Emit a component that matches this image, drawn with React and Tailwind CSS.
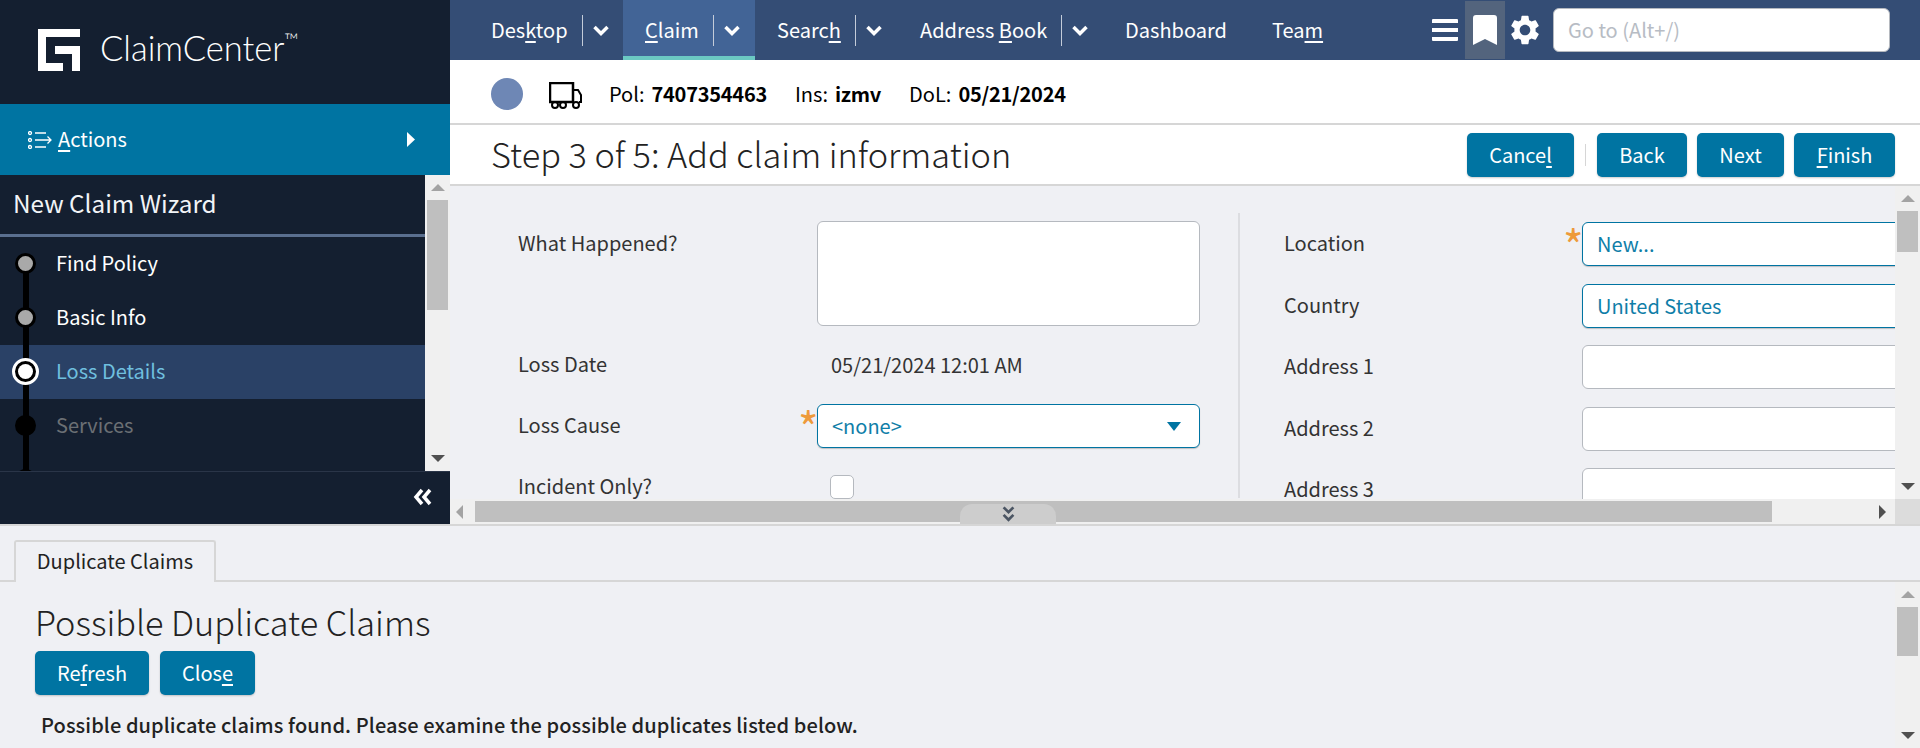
const font = { fontFamily: '"Noto Sans CJK SC", "Noto Sans", sans-serif' };

function Key({ children }) {
  return <span className="underline underline-offset-[3px] decoration-[1.5px]">{children}</span>;
}

function NavItem({ children, active, chevron, width }) {
  return (
    <div className={`flex h-[60px] items-center ${active ? "bg-[#426496] shadow-[inset_0_-4px_0_#6bc9c3]" : ""} ${width}`}>
      <span className="ml-[22px] whitespace-nowrap">{children}</span>
      {chevron && (
        <>
          <span className="ml-[14px] h-[31px] w-[1px] bg-[#c4ccd9]" />
          <svg viewBox="0 0 16 11" className="ml-[10px] h-[11px] w-[16px]">
            <path d="M1.500 2 8 8.500 14.500 2" fill="none" stroke="#fff" strokeWidth="3.500" />
          </svg>
        </>
      )}
    </div>
  );
}

function Btn({ children, width }) {
  return (
    <button className={`flex h-[44px] items-center justify-center rounded-[5px] bg-[#0074a2] text-[20px] text-white shadow-[0_1px_2px_rgba(0,0,0,.2)] ${width}`}>
      {children}
    </button>
  );
}

function Arrow({ dir, dark }) {
  const d = { up: "M0 8 8 0l8 8z", down: "M0 0h16L8 8z", left: "M8 0v16L0 8z", right: "M0 0l8 8-8 8z" }[dir];
  const box = dir === "up" || dir === "down" ? "0 0 16 8" : "0 0 8 16";
  const size = dir === "up" || dir === "down" ? "h-[7px] w-[14px]" : "h-[14px] w-[7px]";
  return (
    <svg viewBox={box} className={size}>
      <path d={d} fill={dark ? "#505050" : "#a3a3a3"} />
    </svg>
  );
}

function VScroll({ thumb, className = "" }) {
  return (
    <div className={`flex w-[25px] shrink-0 flex-col items-center bg-[#f0f0f0] ${className}`}>
      <div className="flex h-[25px] items-start justify-center pt-[9px]"><Arrow dir="up" /></div>
      <div className={`w-[21px] bg-[#bfbfbf] ${thumb}`} />
      <div className="flex-1" />
      <div className="flex items-center justify-center pb-[9px]"><Arrow dir="down" dark /></div>
    </div>
  );
}

function Step({ label, state, first }) {
  const rowClass = state === "active" ? "bg-[#2a4166] text-[#6fbfdf]" : state === "off" ? "text-[#6b6f74]" : "text-white";
  return (
    <div className={`relative flex h-[54px] items-center pb-[2px] pl-[56px] text-[20px] ${rowClass}`}>
      <span className={`absolute left-[23px] w-[6px] bg-black ${first ? "bottom-0 top-[27px]" : "top-0 h-full"}`} />
      {state === "active" ? (
        <span className="absolute left-[12px] top-[13px] size-[27px] rounded-full border-[3px] border-white bg-black p-[3px]">
          <span className="block size-full rounded-full bg-white" />
        </span>
      ) : (
        <span className={`absolute left-[15px] top-[16px] size-[21px] rounded-full border-[3px] border-black ${state === "off" ? "bg-black" : "bg-[#a9a9a9]"}`} />
      )}
      {label}
    </div>
  );
}

function Sidebar() {
  return (
    <aside className="flex h-[524px] w-[450px] shrink-0 flex-col bg-[#141f30]">
      <div className="flex h-[104px] items-center pb-[4px] pl-[38px]">
        <svg viewBox="0 0 42 42" className="size-[42px]">
          <path fill="#fff" d="M0 0h42v8H8v26h17v8H0z" />
          <path fill="#fff" d="M17 17h25v25h-8V25H17z" />
        </svg>
        <span className="mb-[3px] ml-[20px] flex items-start text-[34.500px] font-light leading-none text-white" style={{ fontFamily: "Lato, sans-serif" }}>
          ClaimCenter
          <span className="-mt-[1px] text-[19px] leading-none">™</span>
        </span>
      </div>
      <div className="flex h-[71px] items-center bg-[#0074a2] pl-[28px] pr-[35px] text-[20px] text-white">
        <svg viewBox="0 0 24 18" className="h-[18px] w-[24px]" fill="none" stroke="#fff" strokeWidth="1.300">
          <circle cx="2" cy="2" r="1.500" />
          <circle cx="2" cy="9" r="1.500" />
          <circle cx="2" cy="16" r="1.500" />
          <path d="M7 2h11M7 16h11M7 9h16M19.500 5.500 23 9l-3.500 3.500" />
        </svg>
        <span className="ml-[6px] pb-[2px]"><Key>A</Key>ctions</span>
        <svg viewBox="0 0 8 15" className="ml-auto h-[15px] w-[8px]"><path d="M0 0l8 7.500-8 7.500z" fill="#fff" /></svg>
      </div>
      <div className="flex min-h-0 flex-1">
        <div className="min-w-0 flex-1 overflow-hidden">
          <div className="flex h-[62px] items-center border-b-[3px] border-[#5a6f8f] pb-[2px] pl-[13px] text-[24.300px] text-[#f2f4f7]">
            New Claim Wizard
          </div>
          <Step label="Find Policy" first />
          <Step label="Basic Info" />
          <Step label="Loss Details" state="active" />
          <Step label="Services" state="off" />
          <Step label="" state="off" />
        </div>
        <VScroll thumb="h-[110px]" />
      </div>
      <div className="flex h-[53px] items-start justify-end border-t border-[#2a3548] pr-[17px] pt-[16px]">
        <svg viewBox="0 0 20 18" className="h-[18px] w-[20px]">
          <path d="M9 2 3 9l6 7M17 2l-6 7 6 7" fill="none" stroke="#fff" strokeWidth="3.500" />
        </svg>
      </div>
    </aside>
  );
}

function TopNav() {
  return (
    <nav className="flex h-[60px] items-center bg-[#344d75] text-[20px] text-white">
      <div className="w-[19px]" />
      <NavItem chevron width="w-[154px]">Des<Key>k</Key>top</NavItem>
      <NavItem chevron active width="w-[132px]"><Key>C</Key>laim</NavItem>
      <NavItem chevron width="w-[143px]">Searc<Key>h</Key></NavItem>
      <NavItem chevron width="w-[205px]">Address <Key>B</Key>ook</NavItem>
      <NavItem width="w-[147px]">Dashboard</NavItem>
      <NavItem width="w-[182px]">Tea<Key>m</Key></NavItem>
      <svg viewBox="0 0 26 22" className="h-[22px] w-[26px]">
        <path d="M0 1a1 1 0 0 1 1-1h24a1 1 0 0 1 1 1v3H0zM0 9h26v4H0zM0 18h26v3a1 1 0 0 1-1 1H1a1 1 0 0 1-1-1z" fill="#fff" />
      </svg>
      <div className="ml-[7px] mt-px flex h-[58px] w-[40px] items-center justify-center self-start bg-[#53647d]">
        <svg viewBox="0 0 24 30" className="h-[30px] w-[24px]">
          <path d="M3 0h18a3 3 0 0 1 3 3v27l-12-6-12 6V3a3 3 0 0 1 3-3z" fill="#fff" />
        </svg>
      </div>
      <svg viewBox="2.500 2 19 20" className="ml-[6px] h-[30px] w-[28px]">
        <path
          fill="#fff"
          fillRule="evenodd"
          d="M19.140 12.940c.04-.3.06-.61.06-.94 0-.32-.02-.64-.07-.94l2.030-1.580c.18-.14.23-.41.12-.61l-1.920-3.320c-.12-.22-.37-.29-.59-.22l-2.390.96c-.5-.38-1.030-.7-1.620-.94l-.36-2.540c-.04-.24-.24-.41-.48-.41h-3.840c-.24 0-.43.17-.47.41l-.36 2.540c-.59.24-1.130.57-1.620.94l-2.390-.96c-.22-.08-.47 0-.59.22L2.740 8.870c-.12.21-.08.47.12.61l2.030 1.580c-.05.3-.09.63-.09.94s.02.64.07.94l-2.030 1.580c-.18.14-.23.41-.12.61l1.920 3.320c.12.22.37.29.59.22l2.390-.96c.5.38 1.030.7 1.620.94l.36 2.540c.05.24.24.41.48.41h3.840c.24 0 .44-.17.47-.41l.36-2.540c.59-.24 1.130-.56 1.620-.94l2.390.96c.22.08.47 0 .59-.22l1.920-3.320c.12-.22.07-.47-.12-.61l-2.010-1.580zM12 15.600c-1.980 0-3.600-1.620-3.600-3.600s1.620-3.600 3.600-3.600 3.600 1.620 3.600 3.600-1.620 3.600-3.600 3.600z"
        />
      </svg>
      <div className="ml-[14px] flex h-[44px] w-[337px] items-center rounded-[6px] border border-[#b5b9bf] bg-white pl-[14px] text-[#b7bcc4]">
        Go to (Alt+/)
      </div>
    </nav>
  );
}

function InfoBar() {
  return (
    <div className="flex h-[65px] items-center border-b-2 border-[#d6d6d6] bg-white pl-[41px] pt-[5px] text-[20px] text-black">
      <span className="size-[32px] rounded-full bg-[#6e87b5]" />
      <svg viewBox="0 0 33 27" className="ml-[26px] mt-[2px] h-[27px] w-[33px]" fill="none" stroke="#000" strokeWidth="2">
        <path d="M1 1h23v19H1z" strokeWidth="2.500" />
        <path d="M24 8h5l3 5v7h-2" />
        <circle cx="6" cy="23" r="3" />
        <circle cx="14" cy="23" r="3" />
        <circle cx="27" cy="23" r="3" />
      </svg>
      <span className="ml-[27px]">Pol:</span>
      <b className="ml-[7px] font-semibold tracking-[-0.25px]">7407354463</b>
      <span className="ml-[28px]">Ins:</span>
      <b className="ml-[7px] font-semibold tracking-[-0.25px]">izmv</b>
      <span className="ml-[28px]">DoL:</span>
      <b className="ml-[7px] font-semibold tracking-[-0.25px]">05/21/2024</b>
    </div>
  );
}

function TitleBar() {
  return (
    <div className="flex h-[61px] items-center border-b-2 border-[#d6d6d6] bg-white pl-[41px] pr-[25px]">
      <h1 className="pb-[2px] text-[34.300px] font-extralight text-[#222]">Step 3 of 5: Add claim information</h1>
      <div className="ml-auto flex items-center">
        <Btn width="w-[107px]">Cance<Key>l</Key></Btn>
        <span className="ml-[11px] h-[22px] w-[1px] bg-[#d6d6d6]" />
        <div className="ml-[11px] flex gap-[10px]">
          <Btn width="w-[90px]">Back</Btn>
          <Btn width="w-[87px]">Next</Btn>
          <Btn width="w-[101px]"><Key>F</Key>inish</Btn>
        </div>
      </div>
    </div>
  );
}

function Field({ label, mt, children }) {
  return (
    <div className={`flex ${mt}`}>
      <div className="flex w-[298px] shrink-0 items-center pb-[2px] leading-[18px]">{label}</div>
      {children}
    </div>
  );
}

function Box({ blue, required, className = "", children }) {
  return (
    <div className={`relative flex h-[44px] items-center rounded-[6px] border pl-[14px] text-[#0f7ea8] ${blue ? "border-[#0074a2] shadow-[0_1px_1px_rgba(0,0,0,.2)]" : "border-[#b5b9bf]"} bg-white ${className}`}>
      {required && <span className="absolute -left-[20px] -top-[1px] text-[44px] leading-[44px] text-[#ee9a3a]">*</span>}
      {children}
    </div>
  );
}

function Form() {
  return (
    <div className="flex min-h-0 flex-1 overflow-hidden bg-[#eff0f4] text-[20px] text-[#333]">
      <div className="mt-[27px] h-[285px] w-[790px] shrink-0 border-r-2 border-[#dcdde1] pl-[68px] pt-[8px]">
        <div className="flex h-[105px]">
          <div className="w-[299px] pt-[7px]">What Happened?</div>
          <div className="h-[105px] w-[383px] rounded-[6px] border border-[#b5b9bf] bg-white" />
        </div>
        <div className="mt-[14px] flex h-[50px] items-center">
          <div className="w-[299px] pb-[3px]">Loss Date</div>
          <div className="pl-[14px]">05/21/2024 12:01 AM</div>
        </div>
        <div className="mt-[14px] flex">
          <div className="flex w-[299px] items-center pb-[2px] leading-[18px]">Loss Cause</div>
          <Box blue required className="w-[383px] justify-between pr-[18px]">
            &lt;none&gt;
            <svg viewBox="0 0 14 9" className="h-[9px] w-[14px]"><path d="M0 0h14L7 9z" fill="#0074a2" /></svg>
          </Box>
        </div>
        <div className="mt-[27px] flex h-[24px] items-center">
          <div className="w-[312px] pb-[2px] leading-[18px]">Incident Only?</div>
          <div className="size-[24px] rounded-[5px] border border-[#b5b9bf] bg-white" />
        </div>
      </div>
      <div className="min-w-0 flex-1 pl-[44px] pt-[36px]">
        <div className="flex flex-col">
          <Field label="Location">
            <Box blue required className="w-[400px] shrink-0">New...</Box>
          </Field>
          <Field label="Country" mt="mt-[18px]">
            <Box blue className="w-[400px] shrink-0">United States</Box>
          </Field>
          <Field label="Address 1" mt="mt-[17px]"><Box className="w-[400px] shrink-0" /></Field>
          <Field label="Address 2" mt="mt-[18px]"><Box className="w-[400px] shrink-0" /></Field>
          <Field label="Address 3" mt="mt-[17px]"><Box className="w-[400px] shrink-0" /></Field>
        </div>
      </div>
    </div>
  );
}

function HScroll() {
  return (
    <div className="relative flex h-[25px] shrink-0 items-stretch bg-[#f0f0f0]">
      <div className="flex w-[25px] items-center pl-[6px]"><Arrow dir="left" /></div>
      <div className="mt-[2px] h-[21px] w-[1297px] bg-[#bfbfbf]" />
      <div className="flex flex-1 items-center justify-end pr-[9px]"><Arrow dir="right" dark /></div>
      {/* collapse handle sits over the scrollbar */}
      <div className="absolute left-[510px] top-[5px] flex h-[20px] w-[96px] items-center justify-center rounded-t-[12px] bg-[#cdcdcd]">
        <svg viewBox="0 0 14 18" className="h-[16px] w-[13px]">
          <path d="M1.500 1.500 7 7l5.500-5.500M1.500 10 7 15.500 12.500 10" fill="none" stroke="#4b5563" strokeWidth="3" />
        </svg>
      </div>
    </div>
  );
}

function Bottom() {
  return (
    <section className="h-[224px] overflow-hidden border-t-2 border-[#d6d6d6] bg-[#eff0f4] text-[#333]">
      <div className="flex h-[56px] items-end border-b-2 border-[#d6d6d6] pl-[14px]">
        <div className="-mb-[2px] flex h-[42px] w-[202px] items-center justify-center rounded-t-[3px] border-x-2 border-t-2 border-[#d6d6d6] bg-[#eff0f4] pb-[2px] text-[20px] text-[#222]">
          Duplicate Claims
        </div>
      </div>
      <div className="flex h-[166px]">
        <div className="min-w-0 flex-1 pl-[35px]">
          <h2 className="mt-[16px] text-[34.300px] font-extralight leading-[46px] text-[#222]">Possible Duplicate Claims</h2>
          <div className="mt-[7px] flex gap-[11px]">
            <Btn width="w-[114px]">Re<Key>f</Key>resh</Btn>
            <Btn width="w-[95px]">Clos<Key>e</Key></Btn>
          </div>
          <p className="ml-[6px] mt-[15px] text-[20px] font-medium tracking-[0.1px] text-[#222]">
            Possible duplicate claims found. Please examine the possible duplicates listed below.
          </p>
        </div>
        <VScroll thumb="h-[49px]" />
      </div>
    </section>
  );
}

export default function App() {
  return (
    <div className="h-[748px] w-[1920px] overflow-hidden bg-[#eff0f4]" style={font}>
      <div className="flex h-[524px]">
        <Sidebar />
        <main className="flex min-w-0 flex-1 flex-col">
          <TopNav />
          <InfoBar />
          <TitleBar />
          <div className="flex min-h-0 flex-1">
            <div className="flex min-w-0 flex-1 flex-col">
              <Form />
              <HScroll />
            </div>
            <div className="flex w-[25px] shrink-0 flex-col">
              <VScroll thumb="h-[41px]" className="min-h-0 flex-1" />
              <div className="h-[25px] bg-[#dcdcdc]" />
            </div>
          </div>
        </main>
      </div>
      <Bottom />
    </div>
  );
}
